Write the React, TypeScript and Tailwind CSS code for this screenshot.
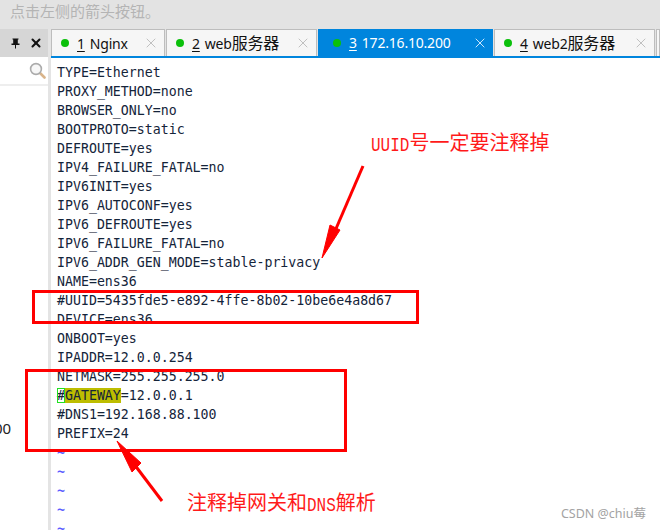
import React from "react";
import { X } from "lucide-react";

const lines = [
  "TYPE=Ethernet",
  "PROXY_METHOD=none",
  "BROWSER_ONLY=no",
  "BOOTPROTO=static",
  "DEFROUTE=yes",
  "IPV4_FAILURE_FATAL=no",
  "IPV6INIT=yes",
  "IPV6_AUTOCONF=yes",
  "IPV6_DEFROUTE=yes",
  "IPV6_FAILURE_FATAL=no",
  "IPV6_ADDR_GEN_MODE=stable-privacy",
  "NAME=ens36",
  "#UUID=5435fde5-e892-4ffe-8b02-10be6e4a8d67",
  "DEVICE=ens36",
  "ONBOOT=yes",
  "IPADDR=12.0.0.254",
  "NETMASK=255.255.255.0",
  "GATEWAY",
  "#DNS1=192.168.88.100",
  "PREFIX=24",
];

const tabs = [
  { num: "1", label: "Nginx", cjk: "", width: "w-[114px]", active: false },
  { num: "2", label: "web", cjk: "服务器", width: "w-[151px]", active: false },
  { num: "3", label: "172.16.10.200", cjk: "", width: "w-[175px]", active: true },
  { num: "4", label: "web2", cjk: "服务器", width: "w-[161px]", active: false },
];

type TabProps = { num: string; label: string; cjk: string; width: string; active: boolean };

function Tab({ num, label, cjk, width, active }: TabProps) {
  return (
    <div
      className={`${width} h-[27px] flex items-center pr-[5px] shrink-0 text-[14px] tracking-[-0.2px] ${
        active ? "bg-[#0085dd] text-white pl-[15px]" : "bg-[#f6f6f6] border border-b-0 border-[#bdbdbd] text-[#111] pl-[9px]"
      }`}
    >
      <span className="w-[8px] h-[8px] rounded-full bg-[#0bc00b] mr-[8px] shrink-0" />
      <span className="underline underline-offset-2 mr-[5px]">{num}</span>
      <span className="flex-1 whitespace-nowrap">
        {label}
        {cjk && <span className="text-[16px]">{cjk}</span>}
      </span>
      <X size={16} strokeWidth={1.4} className={active ? "text-[#dcefff]" : "text-[#bbbbbb]"} />
    </div>
  );
}

export default function App() {
  return (
    <div className="relative w-[660px] h-[530px] overflow-hidden bg-white font-['Noto_Sans','Noto_Sans_CJK_SC',sans-serif]">
      <div className="h-[29px] bg-[#e3e3e3] pl-[10px] pt-[1px] text-[15px] leading-[20px] text-[#b4b4b4] font-['Noto_Sans_CJK_SC',sans-serif]">
        点击左侧的箭头按钮。
      </div>

      <div className="flex h-[501px]">
        {/* left dock */}
        <div className="w-[48px] shrink-0 flex flex-col">
          <div className="h-[28px] bg-[#d6d6d6] flex items-center justify-end gap-[9px] pr-[5px]">
            <svg width="9" height="11" viewBox="0 0 9 11" className="text-[#111]">
              <path d="M1.5 0.5H7.5V1.5H6.8V5.5H8.5V7H5V10.5H4V7H0.5V5.5H2.2V1.5H1.5Z" fill="currentColor" />
            </svg>
            <X size={14} strokeWidth={3.5} className="text-[#111]" />
          </div>
          <div className="h-[29px] flex items-center justify-end pr-[2px] border-b-2 border-[#eeeeee]">
            <svg width="17" height="17" viewBox="0 0 17 17">
              <path d="M10.5 10.5L15.5 15.5" stroke="#d9b48a" strokeWidth="2.6" strokeLinecap="round" />
              <circle cx="7" cy="7" r="5.4" fill="#f7f7f7" stroke="#ababab" strokeWidth="1.6" />
            </svg>
          </div>
          <div className="flex-1 flex items-end pb-[91px] text-[15px] text-[#222]">
            <span className="-ml-[6px]">00</span>
          </div>
        </div>
        <div className="w-[3px] shrink-0 bg-[#e4e4e4]" />

        {/* terminal */}
        <div className="flex-1 min-w-0 flex flex-col">
          <div className="flex h-[29px] bg-[#e3e3e3] gap-[1px] border-b-2 border-[#0085dd]">
            {tabs.map((t) => (
              <Tab key={t.num} {...t} />
            ))}
            <div className="flex-1 bg-[#f6f6f6] border border-b-0 border-[#bdbdbd]" />
          </div>
          <div className="pl-[6px] pt-[5px] font-['DejaVu_Sans_Mono',monospace] text-[13.25px] leading-[19px] text-[#14243a]">
            {lines.map((line) =>
              line === "GATEWAY" ? (
                <div key={line} className="h-[19px] whitespace-pre">
                  <span className="outline outline-1 -outline-offset-1 outline-[#22e022]">#</span>
                  <span className="bg-[#bdbd00]">GATEWAY</span>=12.0.0.1
                </div>
              ) : (
                <div key={line} className="h-[19px] whitespace-pre">
                  {line}
                </div>
              )
            )}
            {[0, 1, 2, 3, 4].map((i) => (
              <div key={i} className="h-[19px] font-bold text-[#5c5cff]">
                ~
              </div>
            ))}
          </div>
        </div>
      </div>

      {/* annotations on top of the screenshot */}
      <div className="absolute left-[32px] top-[290px] w-[387px] h-[34px] border-[3px] border-[#ff0000]" />
      <div className="absolute left-[25px] top-[369px] w-[322px] h-[83px] border-[3px] border-[#ff0000]" />

      <svg className="absolute left-0 top-0 pointer-events-none" width="660" height="530">
        <path d="M363 166 L335 231" stroke="#ff0000" strokeWidth="3" fill="none" />
        <path d="M322 258 L330 225 L340 230 Z" fill="#ff0000" stroke="#ff0000" strokeWidth="1" />
        <path d="M162 501 L134 464" stroke="#ff0000" strokeWidth="3" fill="none" />
        <path d="M117 441 L141 463 L132 472 Z" fill="#ff0000" stroke="#ff0000" strokeWidth="1" />
      </svg>

      <div className="absolute left-[371px] top-[130px] text-[#ff1a1a] text-[20px] leading-[30px] whitespace-nowrap font-['Liberation_Mono','Noto_Sans_CJK_SC',monospace]">
        <span className="inline-block text-[16px] scale-y-[1.3]">UUID</span>号一定要注释掉
      </div>
      <div className="absolute left-[187px] top-[490px] text-[#ff1a1a] text-[20px] leading-[30px] whitespace-nowrap font-['Liberation_Mono','Noto_Sans_CJK_SC',monospace]">
        注释掉网关和<span className="inline-block text-[16px] scale-y-[1.3]">DNS</span>解析
      </div>

      <div className="absolute right-[14px] top-[505px] text-[12.5px] leading-[18px] text-[#a3a3a3]">
        CSDN @chiu莓
      </div>
    </div>
  );
}
